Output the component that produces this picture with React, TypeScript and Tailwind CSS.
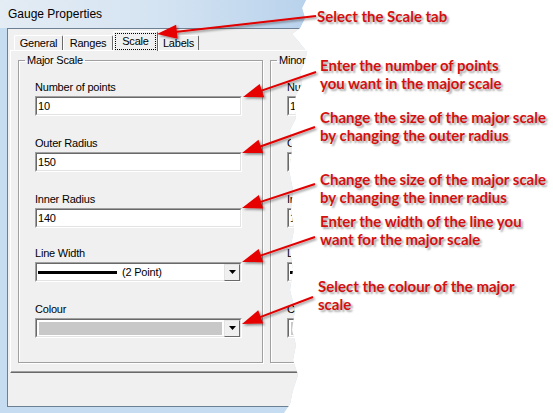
import type { ReactNode } from 'react'

const ui = "font-['Liberation_Sans',Arial,sans-serif] text-[11px] leading-[13px] tracking-[-0.2px] text-black"

const arrows = [
  [316, 16, 157, 34],
  [316, 72, 243, 97],
  [315, 127, 242, 153],
  [315, 184, 242, 208],
  [315, 237, 242, 262],
  [313, 297, 242, 324],
]

function Arrow({ sx, sy, tx, ty }: { sx: number; sy: number; tx: number; ty: number }) {
  const dx = tx - sx
  const dy = ty - sy
  const len = Math.hypot(dx, dy)
  const ux = dx / len
  const uy = dy / len
  const bx = tx - ux * 20
  const by = ty - uy * 20
  const nx = -uy * 7
  const ny = ux * 7
  return (
    <g filter="url(#shade)">
      <line x1={sx} y1={sy} x2={bx + ux * 2} y2={by + uy * 2} stroke="#e10000" strokeWidth={2} />
      <polygon points={`${tx},${ty} ${bx + nx},${by + ny} ${bx - nx},${by - ny}`} fill="#e60000" />
    </g>
  )
}

function TextBox({ children }: { children?: ReactNode }) {
  return (
    <div className="h-[20px] w-[207px] border border-[#a0a0a0] border-b-white border-r-white">
      <div className="h-full border border-[#696969] border-b-[#e3e3e3] border-r-[#e3e3e3] bg-white pl-[1px] pt-[2px]">
        {children}
      </div>
    </div>
  )
}

function DropButton() {
  return (
    <div className="flex h-[17px] w-[16px] items-center justify-center border border-[#e3e3e3] border-b-[#696969] border-r-[#696969] bg-[#f0f0f0]">
      <svg width="7" height="4" viewBox="0 0 7 4">
        <polygon points="0,0 7,0 3.5,4" fill="#000" />
      </svg>
    </div>
  )
}

function ComboBox({ children }: { children?: ReactNode }) {
  return (
    <div className="h-[20px] w-[207px] border border-[#a0a0a0] border-b-white border-r-white">
      <div className="flex h-full items-center border border-[#696969] border-b-[#e3e3e3] border-r-[#e3e3e3] bg-white">
        <div className="flex h-full flex-1 items-center">{children}</div>
        <DropButton />
      </div>
    </div>
  )
}

function Field({ label, className, children }: { label: string; className?: string; children: ReactNode }) {
  return (
    <div className={className}>
      <div className="h-[13px] whitespace-nowrap">{label}</div>
      <div className="mt-[2px]">{children}</div>
    </div>
  )
}

function ScaleGroup({ title, points, outer, inner }: { title: string; points: string; outer: string; inner: string }) {
  return (
    <fieldset className="h-[309px] w-[245px] shrink-0 border border-[#a0a0a0] shadow-[inset_1px_1px_0_#fff,1px_1px_0_#fff]">
      <legend className="ml-[6px] whitespace-nowrap px-[2px]">{title}</legend>
      <div className="pl-[16px]">
        <Field label="Number of points" className="mt-[14px]">
          <TextBox>{points}</TextBox>
        </Field>
        <Field label="Outer Radius" className="mt-[21px]">
          <TextBox>{outer}</TextBox>
        </Field>
        <Field label="Inner Radius" className="mt-[21px]">
          <TextBox>{inner}</TextBox>
        </Field>
        <Field label="Line Width" className="mt-[19px]">
          <ComboBox>
            <div className="ml-[1px] h-[3px] w-[79px] bg-black" />
            <span className="ml-[5px]">(2 Point)</span>
          </ComboBox>
        </Field>
        <Field label="Colour" className="mt-[21px]">
          <ComboBox>
            <div className="mx-[2px] h-[13px] flex-1 bg-[#c8c8c8]" />
          </ComboBox>
        </Field>
      </div>
    </fieldset>
  )
}

function Tab({ label, width, selected }: { label: string; width: string; selected?: boolean }) {
  if (selected) {
    return (
      <div className={`relative z-10 -mb-[1px] h-[20px] ${width} rounded-t-[2px] border-l border-t border-r border-white border-r-[#696969] bg-[#f0f0f0] p-[1px]`}>
        <div className="flex h-full items-center justify-center border border-dotted border-black pb-[1px]">{label}</div>
      </div>
    )
  }
  return (
    <div className={`flex h-[15px] ${width} items-center justify-center rounded-t-[2px] border-l border-t border-r border-white border-r-[#696969] bg-[#f0f0f0]`}>
      {label}
    </div>
  )
}

const notes = [
  { mt: 'mt-[7px]', lines: ['Select the Scale tab'], pl: 'pl-[317px]' },
  { mt: 'mt-[31px]', lines: ['Enter the number of points', 'you want in the major scale'], pl: 'pl-[320px]' },
  { mt: 'mt-[16px]', lines: ['Change the size of the major scale', 'by changing the outer radius'], pl: 'pl-[320px]' },
  { mt: 'mt-[26px]', lines: ['Change the size of the major scale', 'by changing the inner radius'], pl: 'pl-[320px]' },
  { mt: 'mt-[6px]', lines: ['Enter the width of the line you', 'want for the major scale'], pl: 'pl-[320px]' },
  { mt: 'mt-[29px]', lines: ['Select the colour of the major', 'scale'], pl: 'pl-[318px]' },
]

export default function App() {
  return (
    <div className="relative h-[413px] w-[553px] overflow-hidden bg-white">
      <div className="flex h-full">
        {/* torn dialog */}
        <div className="flex h-full w-[310px] shrink-0 flex-col overflow-hidden bg-[#c6dcf1] [clip-path:polygon(0_0,306px_0,302px_8px,305px_18px,300px_28px,292px_34px,299px_42px,307px_52px,305px_62px,300px_72px,302px_84px,296px_95px,294px_105px,296px_118px,290px_130px,292px_150px,289px_170px,293px_190px,291px_210px,294px_230px,290px_250px,293px_270px,290px_290px,295px_310px,292px_330px,296px_345px,293px_360px,298px_375px,293px_390px,290px_404px,284px_413px,0_413px)]">
          <div className="h-[28px] shrink-0 bg-gradient-to-r from-[#e4ecf4] via-[#d5e4f2] to-[#b8d2ec] pl-[8px] pt-[7px] font-['Liberation_Sans',Arial,sans-serif] text-[12px] leading-[15px] text-black">
            Gauge Properties
          </div>
          <div className="flex min-h-0 flex-1 pb-[6px] pl-[7px]">
            <div className={`flex flex-1 flex-col border-b border-l border-t border-[#6d7f92] bg-[#f0f0f0] pl-[2px] ${ui}`}>
              <div className="flex h-[21px] shrink-0 items-end pl-[4px]">
                <Tab label="General" width="w-[49px]" />
                <Tab label="Ranges" width="w-[50px]" />
                <Tab label="Scale" width="w-[45px]" selected />
                <Tab label="Labels" width="w-[41px]" />
              </div>
              <div className="flex h-[323px] shrink-0 gap-[7px] border-b border-l border-t border-white border-b-[#696969] pl-[7px] pt-[3px] shadow-[0_-1px_0_#a0a0a0_inset]">
                <ScaleGroup title="Major Scale" points="10" outer="150" inner="140" />
                <div className="w-[40px] shrink-0 overflow-hidden">
                  <ScaleGroup title="Minor Scale" points="15" outer="120" inner="110" />
                </div>
              </div>
            </div>
          </div>
        </div>

        {/* annotations */}
        <div className="absolute inset-0 flex flex-col font-['Lato','Open_Sans',sans-serif] text-[15px] font-bold leading-[18px] text-[#d4100f] [text-shadow:2px_2px_2px_rgba(0,0,0,0.35)]">
          {notes.map((n, i) => (
            <div key={i} className={`${n.mt} ${n.pl}`}>
              {n.lines.map((l) => (
                <div key={l} className="whitespace-nowrap">{l}</div>
              ))}
            </div>
          ))}
        </div>
      </div>

      <svg className="pointer-events-none absolute inset-0" width="553" height="413">
        <defs>
          <filter id="shade" x="-20%" y="-50%" width="140%" height="200%">
            <feDropShadow dx="1.5" dy="1.5" stdDeviation="1" floodColor="#000" floodOpacity="0.45" />
          </filter>
        </defs>
        {arrows.map(([sx, sy, tx, ty], i) => (
          <Arrow key={i} sx={sx} sy={sy} tx={tx} ty={ty} />
        ))}
      </svg>
    </div>
  )
}
